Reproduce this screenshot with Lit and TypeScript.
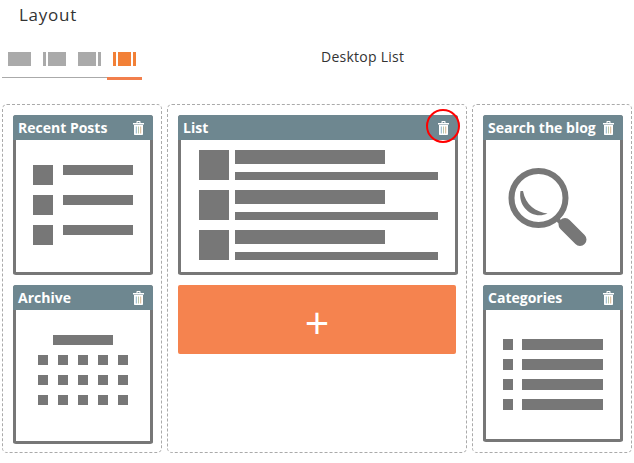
import { LitElement, html, css, svg } from "lit";
import { customElement } from "lit/decorators.js";

const trash = html`<svg class="trash" viewBox="0 0 11 14" width="11" height="14" aria-hidden="true">
  <path fill="#fff" d="M3.5 2V.6C3.5.3 3.8 0 4.1 0h2.8c.3 0 .6.3.6.6V2H11v1.4H0V2zM4.6 1v1h1.8V1z"/>
  <path fill="#fff" d="M1 4h9v9c0 .6-.4 1-1 1H2c-.6 0-1-.4-1-1z"/>
  <path fill="#8fb4c8" d="M2.800 5.500h1v7h-1z"/><path fill="#b9c6a8" d="M5 5.500h1v7H5z"/><path fill="#d8b48c" d="M7.200 5.500h1v7h-1z"/>
</svg>`;

@customElement("app-root")
export class AppRoot extends LitElement {
  static styles = css`
    :host { display: block; width: 634px; height: 463px; overflow: hidden; background: #fff; font-family: "Open Sans", sans-serif; color: #333; position: relative; }
    .title { margin: 0; padding: 3px 0 0 19px; height: 23px; font-size: 17px; font-weight: 400; line-height: 24px; letter-spacing: .75px; color: #333; }
    .tabsrow { display: flex; height: 48px; margin-top: 6px; }
    .tabs { display: flex; width: 140px; margin-left: 2px; height: 48px; box-sizing: border-box; }
    .tab { width: 35px; height: 46px; box-sizing: border-box; padding: 20px 0 0 6px; display: flex; gap: 2px; border-bottom: 1px solid #aaa; }
    .tab.on { border-bottom: 3px solid #f27f4c; height: 48px; }
    .tab i { display: block; height: 14px; background: #aaa; }
    .tab.on i { background: #f28037; }
    .w3 { width: 3px; } .w13 { width: 13px; } .w18 { width: 18px; } .w23 { width: 23px; }
    .caption { position: absolute; left: 321px; top: 47px; font-size: 14px; line-height: 20px; letter-spacing: .25px; color: #333; }
    .main { display: grid; grid-template-columns: 160px 300px 160px; gap: 5px; margin: 24px 0 0 2px; }
    .col { box-sizing: border-box; height: 349px; border: 1px dashed #aaa; border-radius: 5px; padding: 10px 8px 0 10px; display: flex; flex-direction: column; gap: 10px; }
    .card { box-sizing: border-box; border: 3px solid #777; border-top: 0; border-radius: 3px; background: #fff; display: flex; flex-direction: column; }
    .h160 { height: 160px; } .h159 { height: 159px; } .h157 { height: 157px; }
    .head { height: 25px; margin: 0 -3px; padding: 0 9px 0 5px; background: #6e8790; border-radius: 3px 3px 0 0; display: flex; align-items: center; justify-content: space-between; color: #fff; font-size: 14px; font-weight: 700; line-height: 25px; flex: none; }
    .trash { display: block; flex: none; }
    .add { box-sizing: border-box; height: 69px; width: 278px; background: #f5834f; border-radius: 2px; color: #fff; font-size: 43px; line-height: 63px; text-align: center; border: 0; padding: 6px 0 0; font-family: "Open Sans", sans-serif; display: block; }
    .b { display: block; background: #777; }
    .recent { padding: 25px 0 0 17px; display: grid; grid-template-columns: 20px 70px; column-gap: 10px; row-gap: 10px; }
    .recent .s { width: 20px; height: 20px; } .recent .l { height: 10px; width: 70px; }
    .arch { padding: 25px 0 0 22px; }
    .arch .top { width: 60px; height: 10px; margin: 0 0 10px 15px; }
    .arch .grid { display: grid; grid-template-columns: repeat(5, 10px); gap: 10px; }
    .arch .grid .b { height: 10px; }
    .list { padding: 10px 0 0 18px; display: flex; flex-direction: column; gap: 10px; }
    .row { display: flex; gap: 6px; height: 30px; }
    .row .s { width: 30px; height: 30px; }
    .row .t { display: flex; flex-direction: column; gap: 8px; }
    .row .a { width: 150px; height: 15px; } .row .c { width: 203px; height: 8px; }
    .search { padding: 25px 0 0 16px; } .search svg { display: block; }
    .cats { padding: 29px 0 0 17px; display: grid; grid-template-columns: 10px 81px; column-gap: 9px; row-gap: 9px; }
    .cats .b { height: 11px; }
    .ring { position: absolute; left: 426px; top: 109px; width: 34px; height: 34px; box-sizing: border-box; border: 2.5px solid #f00; border-radius: 50%; }
  `;

  private card(title: string, cls: string, body: unknown) {
    return html`<section class="card ${cls}"><div class="head"><span>${title}</span>${trash}</div>${body}</section>`;
  }

  render() {
    const recent = html`<div class="recent">${[0,1,2].map(() => html`<span class="b s"></span><span class="b l"></span>`)}</div>`;
    const archive = html`<div class="arch"><span class="b top"></span><div class="grid">${Array.from({length:15}, () => html`<span class="b"></span>`)}</div></div>`;
    const list = html`<div class="list">${[0,1,2].map(() => html`<div class="row"><span class="b s"></span><div class="t"><span class="b a"></span><span class="b c"></span></div></div>`)}</div>`;
    const search = html`<div class="search"><svg width="90" height="85" viewBox="0 0 90 85" aria-hidden="true">
      ${svg`<circle cx="36.500" cy="33" r="27" fill="none" stroke="#777" stroke-width="6"/>
      <path fill="#777" d="M18.500 26C15.500 43 32 55 45.500 48.500C34 47 23.500 40 21 26z"/>
      <path d="M53 52l9 9" stroke="#777" stroke-width="4" fill="none"/>
      <path d="M63 59.500l15 15" stroke="#777" stroke-width="13" stroke-linecap="round" fill="none"/>`}
    </svg></div>`;
    const cats = html`<div class="cats">${[0,1,2,3].map(() => html`<span class="b"></span><span class="b"></span>`)}</div>`;
    return html`
      <h1 class="title">Layout</h1>
      <div class="tabsrow">
        <div class="tabs">
          <div class="tab"><i class="w23"></i></div>
          <div class="tab"><i class="w3"></i><i class="w18"></i></div>
          <div class="tab"><i class="w18"></i><i class="w3"></i></div>
          <div class="tab on"><i class="w3"></i><i class="w13"></i><i class="w3"></i></div>
        </div>
      </div>
      <div class="caption">Desktop List</div>
      <div class="main">
        <div class="col">${this.card("Recent Posts","h160",recent)}${this.card("Archive","h159",archive)}</div>
        <div class="col">${this.card("List","h160",list)}<button class="add">+</button></div>
        <div class="col">${this.card("Search the blog","h160",search)}${this.card("Categories","h157",cats)}</div>
      </div>
      <div class="ring"></div>
    `;
  }
}
